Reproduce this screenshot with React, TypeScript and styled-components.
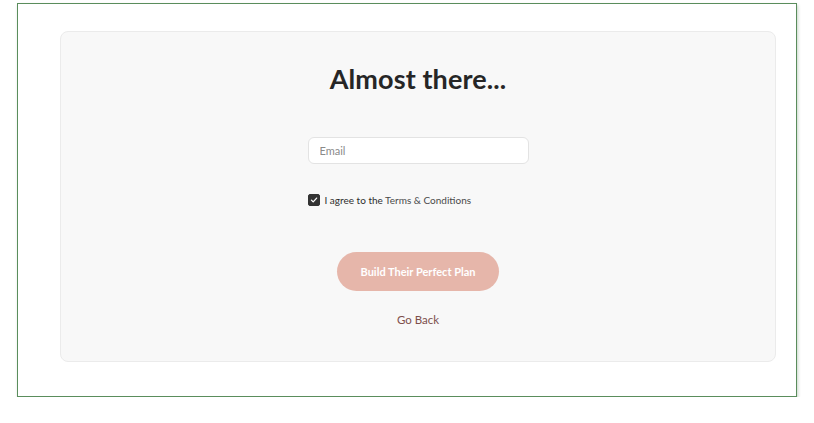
import React, { useState } from "react";
import styled, { createGlobalStyle } from "styled-components";

const GlobalStyle = createGlobalStyle`
  html, body {
    margin: 0;
    padding: 0;
    background: #ffffff;
    font-family: "Lato", "Open Sans", sans-serif;
  }
`;

const App: React.FC = () => {
  const [agreed, setAgreed] = useState(true);

  return (
    <>
      <GlobalStyle />
      <Frame>
        <Card>
          <Title>Almost there...</Title>
          <Form>
            <EmailInput type="email" placeholder="Email" />
            <AgreeRow>
              <CheckBox
                type="button"
                checked={agreed}
                onClick={() => setAgreed(!agreed)}
                aria-pressed={agreed}
              >
                {agreed && (
                  <svg width="8" height="8" viewBox="0 0 10 10" fill="none">
                    <path
                      d="M1.8 5.2 L4 7.3 L8.3 2.6"
                      stroke="#ffffff"
                      strokeWidth="1.6"
                      strokeLinecap="round"
                      strokeLinejoin="round"
                    />
                  </svg>
                )}
              </CheckBox>
              <AgreeText>
                I agree to the <TermsLink>Terms &amp; Conditions</TermsLink>
              </AgreeText>
            </AgreeRow>
          </Form>
          <PlanButton type="button">Build Their Perfect Plan</PlanButton>
          <BackLink>Go Back</BackLink>
        </Card>
      </Frame>
    </>
  );
};

export default App;

const Frame = styled.div`
  box-sizing: border-box;
  width: 780px;
  height: 394px;
  margin: 3px 0 0 17px;
  padding: 27px 20px 34px 42px;
  border: 1px solid #5a8d5c;
  box-shadow: 1px 2px 3px rgba(70, 120, 70, 0.3);
  background: #ffffff;
`;

const Card = styled.div`
  box-sizing: border-box;
  height: 100%;
  display: flex;
  flex-direction: column;
  align-items: center;
  padding-top: 31px;
  background: #f8f8f8;
  border: 1px solid #ebebeb;
  border-radius: 8px;
`;

const Title = styled.h1`
  margin: 0;
  font-size: 27px;
  line-height: 32px;
  font-weight: 700;
  color: #262626;
  letter-spacing: 0.1px;
`;

const Form = styled.div`
  width: 221px;
  margin-top: 42px;
  display: flex;
  flex-direction: column;
`;

const EmailInput = styled.input`
  box-sizing: border-box;
  width: 100%;
  height: 27px;
  padding: 0 11px;
  border: 1px solid #e3e3e3;
  border-radius: 6px;
  background: #ffffff;
  font-family: inherit;
  font-size: 11px;
  color: #333333;
  outline: none;

  &::placeholder {
    color: #8a8a8a;
  }
`;

const AgreeRow = styled.label`
  display: flex;
  align-items: center;
  gap: 5px;
  margin-top: 30px;
  height: 12px;
`;

const CheckBox = styled.button<{ checked: boolean }>`
  box-sizing: border-box;
  width: 12px;
  height: 12px;
  padding: 0;
  display: flex;
  align-items: center;
  justify-content: center;
  border-radius: 2px;
  border: 1px solid #333333;
  background: ${({ checked }) => (checked ? "#333333" : "#ffffff")};
  cursor: pointer;
`;

const AgreeText = styled.span`
  font-size: 10px;
  color: #2e2e2e;
  white-space: nowrap;
`;

const TermsLink = styled.span`
  color: #4a4a4a;
`;

const PlanButton = styled.button`
  margin-top: 46px;
  width: 162px;
  height: 39px;
  border: none;
  border-radius: 20px;
  background: #e6b6aa;
  color: #ffffff;
  font-family: inherit;
  font-size: 11px;
  font-weight: 700;
  cursor: pointer;
`;

const BackLink = styled.a`
  margin-top: 22px;
  font-size: 11.5px;
  line-height: 14px;
  color: #7d4f4c;
  cursor: pointer;
`;
